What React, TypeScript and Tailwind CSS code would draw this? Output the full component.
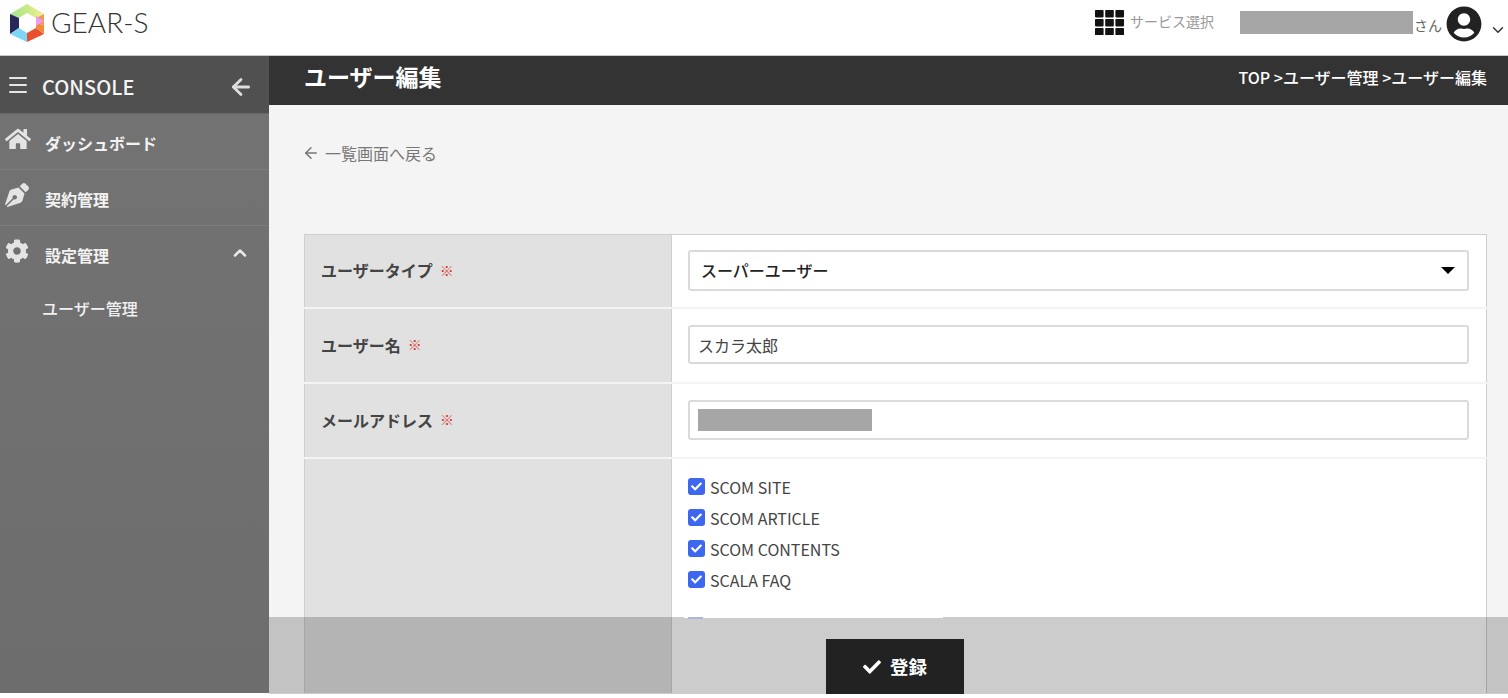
import { ArrowLeft, ChevronDown, ChevronUp, Menu } from 'lucide-react';
import { FaCheck, FaCog, FaHome, FaPenNib, FaUserCircle } from 'react-icons/fa';

const jp = '[font-family:"Noto_Sans_CJK_JP","Noto_Sans",sans-serif]';

function Logo() {
  return (
    <svg width="38" height="38" viewBox="0 0 38 38" className="shrink-0">
      <defs>
        <linearGradient id="logoTop" x1="0" y1="0" x2="1" y2="0">
          <stop offset="0" stopColor="#9fe58b" />
          <stop offset="1" stopColor="#f4ee8c" />
        </linearGradient>
      </defs>
      <polygon points="18,0 35,10 27,14 18,9 10,14 1,10" fill="url(#logoTop)" />
      <polygon points="1,10 10,14 10,24 1,30" fill="#27275a" />
      <polygon points="1,30 10,24 18,29 18,38" fill="#7ed6f6" />
      <polygon points="18,38 18,29 27,24 35,30" fill="#e8502f" />
      <polygon points="35,30 27,24 27,19 35,21" fill="#f08b3d" />
      <polygon points="27,14 35,10 35,21 27,19" fill="#ee9a52" />
      <polygon points="27,12 35,17 27,22" fill="#ee9af0" />
    </svg>
  );
}

function GridIcon() {
  const cells = [0, 1, 2, 3, 4, 5, 6, 7, 8];
  return (
    <svg width="29" height="25" viewBox="0 0 29 25">
      {cells.map((c) => (
        <rect
          key={c}
          x={(c % 3) * 10.2}
          y={Math.floor(c / 3) * 9}
          width="8.6"
          height="7.4"
          rx="0.8"
          fill="#111"
        />
      ))}
    </svg>
  );
}

function Header() {
  return (
    <header className="flex h-[56px] items-start border-b border-[#c9c9c9] bg-white">
      <div className="ml-[9px] mt-[4px]">
        <Logo />
      </div>
      <span className="ml-[4px] mt-[4px] text-[28px] font-light leading-[36px] text-[#333] [font-family:Lato,sans-serif]">
        GEAR-S
      </span>
      <div className="ml-auto flex items-start">
        <div className="mt-[10px]">
          <GridIcon />
        </div>
        <span className="ml-[6px] mt-[10px] text-[14px] leading-[22px] text-[#999]">サービス選択</span>
        <div className="ml-[26px] mt-[11px] h-[23px] w-[173px] bg-[#a6a6a6]" />
        <span className="ml-[1px] mt-[14px] text-[14px] leading-[22px] text-[#666]">さん</span>
        <FaUserCircle className="ml-[4px] mt-[6px] text-[36px] text-[#222]" />
        <ChevronDown className="ml-[7px] mr-[1px] mt-[21px] text-[#333]" size={18} strokeWidth={2} />
      </div>
    </header>
  );
}

function SideItem({ icon, label }: { icon: React.ReactNode; label: string }) {
  return (
    <div className="flex h-[56px] items-center border-b border-[#7d7d7d] pl-[5px] pr-[19px]">
      <span className="flex w-[40px] -translate-y-[3px] text-[26px] text-[#e4e4e4]">{icon}</span>
      <span className="translate-y-[1px] text-[16px] font-bold text-[#f2f2f2]">{label}</span>
    </div>
  );
}

function Sidebar() {
  return (
    <aside className="flex w-[269px] shrink-0 flex-col bg-gradient-to-b from-[#737373] to-[#6d6d6d]">
      <div className="flex h-[58px] items-center border-b border-[#666] bg-[#505050] pl-[6px] pr-[15px]">
        <Menu className="text-[#e6e6e6]" size={24} strokeWidth={2} />
        <span className="ml-[12px] translate-y-[2px] text-[20px] font-medium text-[#f4f4f4]">CONSOLE</span>
        <ArrowLeft className="ml-auto translate-y-[2px] text-[#dddddd]" size={26} strokeWidth={2.6} />
      </div>
      <SideItem icon={<FaHome />} label="ダッシュボード" />
      <SideItem icon={<FaPenNib className="text-[24px]" />} label="契約管理" />
      <div className="flex h-[56px] items-center pl-[5px] pr-[19px]">
        <span className="flex w-[40px] -translate-y-[3px] text-[24px] text-[#e4e4e4]">
          <FaCog />
        </span>
        <span className="translate-y-[1px] text-[16px] font-bold text-[#f2f2f2]">設定管理</span>
        <ChevronUp className="ml-auto -translate-y-[1px] text-[#e8e8e8]" size={20} strokeWidth={3} />
      </div>
      <span className="ml-[42px] mt-[14px] text-[16px] font-medium leading-[24px] text-[#f2f2f2]">ユーザー管理</span>
    </aside>
  );
}

function FormRow({ label, height, children }: { label: string; height: string; children: React.ReactNode }) {
  return (
    <div className={`flex shrink-0 ${height}`}>
      <div className="flex w-[368px] shrink-0 items-center border-x border-[#cfcfcf] bg-[#e1e1e1] pb-[2px] pl-[16px]">
        <span className="text-[16px] font-bold text-[#444]">{label}</span>
        <span className="ml-[7px] text-[14px] font-black text-[#d8352a]">※</span>
      </div>
      <div className="flex flex-1 items-center border-r border-[#cfcfcf] bg-white pb-[2px] pl-[16px] pr-[17px]">{children}</div>
    </div>
  );
}

function CheckItem({ label }: { label: string }) {
  return (
    <div className="flex h-[31px] items-center">
      <span className="flex h-[17px] w-[17px] items-center justify-center rounded-[3px] bg-[#3c67ee]">
        <FaCheck className="text-[11px] text-white" />
      </span>
      <span className="ml-[5px] text-[16px] text-[#444]">{label}</span>
    </div>
  );
}

const fieldBox = 'w-full rounded-[3px] border-2 border-[#dadada] bg-white text-[16px]';

export default function App() {
  return (
    <div className={`relative h-[694px] overflow-hidden bg-white ${jp}`}>
      <Header />
      <div className="flex h-[637px]">
        <Sidebar />
        <main className="flex min-w-0 flex-1 flex-col overflow-hidden bg-[#f4f4f4]">
          <div className="flex h-[49px] shrink-0 items-start justify-between bg-[#333] pl-[35px] pr-[21px] text-white">
            <h1 className="mt-[2px] text-[23px] font-bold leading-[36px]">ユーザー編集</h1>
            <span className="mt-[9px] text-[16px] font-medium leading-[24px]">TOP &gt;ユーザー管理 &gt;ユーザー編集</span>
          </div>
          <div className="ml-[33px] mt-[36px] flex shrink-0 items-center text-[16px] leading-[24px] text-[#777]">
            <ArrowLeft size={18} strokeWidth={2} />
            <span className="ml-[5px]">一覧画面へ戻る</span>
          </div>
          <div className="ml-[35px] mr-[21px] mt-[69px] flex shrink-0 flex-col gap-[2px] border-t border-[#cfcfcf]">
            <FormRow label="ユーザータイプ" height="h-[72px]">
              <div className={`flex h-[41px] items-center justify-between pl-[11px] pr-[12px] font-medium text-[#222] ${fieldBox}`}>
                スーパーユーザー
                <span className="h-0 w-0 border-x-[7px] border-t-[7px] border-x-transparent border-t-black" />
              </div>
            </FormRow>
            <FormRow label="ユーザー名" height="h-[73px]">
              <input readOnly value="スカラ太郎" className={`h-[39px] pl-[8px] text-[#444] outline-none ${fieldBox}`} />
            </FormRow>
            <FormRow label="メールアドレス" height="h-[73px]">
              <div className={`flex h-[40px] items-center pl-[8px] ${fieldBox}`}>
                <div className="h-[22px] w-[174px] bg-[#a6a6a6]" />
              </div>
            </FormRow>
            <div className="flex h-[300px]">
              <div className="w-[368px] shrink-0 border-x border-[#cfcfcf] bg-[#e1e1e1]" />
              <div className="flex-1 border-r border-[#cfcfcf] bg-white pl-[16px] pt-[12px]">
                <CheckItem label="SCOM SITE" />
                <CheckItem label="SCOM ARTICLE" />
                <CheckItem label="SCOM CONTENTS" />
                <CheckItem label="SCALA FAQ" />
              </div>
            </div>
          </div>
        </main>
      </div>
      {/* fixed footer bar over the form */}
      <div className="absolute bottom-0 left-[269px] right-0 top-[617px] bg-black/20">
        {/* masked row peeking out under the last checkbox */}
        <div className="absolute left-[415px] top-0 h-[1px] w-[259px] bg-white" />
        <div className="absolute left-[419px] top-0 h-[2px] w-[15px] bg-[#aab6dc]" />
        <div className="absolute left-[557px] top-[22px] flex h-[56px] w-[138px] items-center justify-center bg-[#222] text-white">
          <FaCheck className="text-[18px]" />
          <span className="ml-[9px] text-[18.5px] font-bold">登録</span>
        </div>
      </div>
    </div>
  );
}
